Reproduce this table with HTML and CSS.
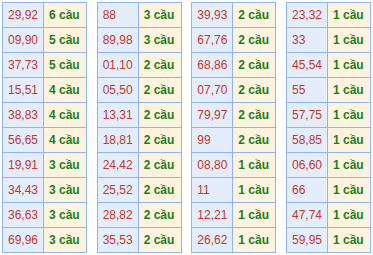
FILE: index.html
```html
<!DOCTYPE html>
<html>
<head>
<meta charset="utf-8">
<link rel="stylesheet" href="styles.css">
</head>
<body>
<div class="wrap">
  <table class="tk">
    <tr><td class="num">29,92</td><td class="cau">6 cầu</td></tr>
    <tr><td class="num">09,90</td><td class="cau">5 cầu</td></tr>
    <tr><td class="num">37,73</td><td class="cau">5 cầu</td></tr>
    <tr><td class="num">15,51</td><td class="cau">4 cầu</td></tr>
    <tr><td class="num">38,83</td><td class="cau">4 cầu</td></tr>
    <tr><td class="num">56,65</td><td class="cau">4 cầu</td></tr>
    <tr><td class="num">19,91</td><td class="cau">3 cầu</td></tr>
    <tr><td class="num">34,43</td><td class="cau">3 cầu</td></tr>
    <tr><td class="num">36,63</td><td class="cau">3 cầu</td></tr>
    <tr><td class="num">69,96</td><td class="cau">3 cầu</td></tr>
  </table>
  <table class="tk">
    <tr><td class="num">88</td><td class="cau">3 cầu</td></tr>
    <tr><td class="num">89,98</td><td class="cau">3 cầu</td></tr>
    <tr><td class="num">01,10</td><td class="cau">2 cầu</td></tr>
    <tr><td class="num">05,50</td><td class="cau">2 cầu</td></tr>
    <tr><td class="num">13,31</td><td class="cau">2 cầu</td></tr>
    <tr><td class="num">18,81</td><td class="cau">2 cầu</td></tr>
    <tr><td class="num">24,42</td><td class="cau">2 cầu</td></tr>
    <tr><td class="num">25,52</td><td class="cau">2 cầu</td></tr>
    <tr><td class="num">28,82</td><td class="cau">2 cầu</td></tr>
    <tr><td class="num">35,53</td><td class="cau">2 cầu</td></tr>
  </table>
  <table class="tk">
    <tr><td class="num">39,93</td><td class="cau">2 cầu</td></tr>
    <tr><td class="num">67,76</td><td class="cau">2 cầu</td></tr>
    <tr><td class="num">68,86</td><td class="cau">2 cầu</td></tr>
    <tr><td class="num">07,70</td><td class="cau">2 cầu</td></tr>
    <tr><td class="num">79,97</td><td class="cau">2 cầu</td></tr>
    <tr><td class="num">99</td><td class="cau">2 cầu</td></tr>
    <tr><td class="num">08,80</td><td class="cau">1 cầu</td></tr>
    <tr><td class="num">11</td><td class="cau">1 cầu</td></tr>
    <tr><td class="num">12,21</td><td class="cau">1 cầu</td></tr>
    <tr><td class="num">26,62</td><td class="cau">1 cầu</td></tr>
  </table>
  <table class="tk">
    <tr><td class="num">23,32</td><td class="cau">1 cầu</td></tr>
    <tr><td class="num">33</td><td class="cau">1 cầu</td></tr>
    <tr><td class="num">45,54</td><td class="cau">1 cầu</td></tr>
    <tr><td class="num">55</td><td class="cau">1 cầu</td></tr>
    <tr><td class="num">57,75</td><td class="cau">1 cầu</td></tr>
    <tr><td class="num">58,85</td><td class="cau">1 cầu</td></tr>
    <tr><td class="num">06,60</td><td class="cau">1 cầu</td></tr>
    <tr><td class="num">66</td><td class="cau">1 cầu</td></tr>
    <tr><td class="num">47,74</td><td class="cau">1 cầu</td></tr>
    <tr><td class="num">59,95</td><td class="cau">1 cầu</td></tr>
  </table>
</div>
</body>
</html>
```
FILE: styles.css
```css
html, body {
  margin: 0;
  padding: 0;
  background: #ffffff;
}
.wrap {
  display: flex;
  justify-content: space-between;
  padding: 2px 2px 0 2px;
  font-family: "Liberation Sans", Arial, sans-serif;
  font-size: 12px;
}
.tk {
  width: 85px;
  border-collapse: collapse;
  table-layout: fixed;
}
.tk td {
  border: 1px solid #8fb4ee;
  height: 25px;
  padding: 0 0 0 5px;
  box-sizing: border-box;
  vertical-align: middle;
  line-height: 14px;
  white-space: nowrap;
}
.tk .num {
  width: 41px;
  background: #e3edfc;
  color: #c0392b;
}
.tk .cau {
  background: #fdf3df;
  color: #1e7e1e;
  font-weight: bold;
}
```
